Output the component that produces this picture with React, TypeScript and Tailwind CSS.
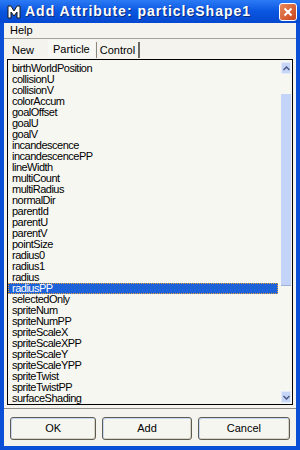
const items = [
  "birthWorldPosition",
  "collisionU",
  "collisionV",
  "colorAccum",
  "goalOffset",
  "goalU",
  "goalV",
  "incandescence",
  "incandescencePP",
  "lineWidth",
  "multiCount",
  "multiRadius",
  "normalDir",
  "parentId",
  "parentU",
  "parentV",
  "pointSize",
  "radius0",
  "radius1",
  "radius",
  "radiusPP",
  "selectedOnly",
  "spriteNum",
  "spriteNumPP",
  "spriteScaleX",
  "spriteScaleXPP",
  "spriteScaleY",
  "spriteScaleYPP",
  "spriteTwist",
  "spriteTwistPP",
  "surfaceShading",
];

const selected = "radiusPP";

function MayaIcon() {
  return (
    <svg width="14" height="14" viewBox="0 0 14 14">
      <path
        d="M1 13V1h3l3 5 3-5h3v12h-3V7l-3 4-3-4v6z"
        fill="#ffffff"
        stroke="#1a1a1a"
        strokeWidth="1"
      />
    </svg>
  );
}

function XpButton({ label, className }: { label: string; className: string }) {
  return (
    <button
      type="button"
      className={`h-[23px] rounded-[3px] border border-[#5e5b52] bg-[#f6f6f1] shadow-[inset_1px_1px_0_#c9d6f4,inset_-1px_-1px_0_#d5d2c6] text-[11px] text-black ${className}`}
    >
      {label}
    </button>
  );
}

export default function App() {
  return (
    <div
      className="w-[300px] h-[450px] flex flex-col bg-[#0b4fd6] overflow-hidden"
      style={{ fontFamily: '"Liberation Sans", Arial, sans-serif' }}
    >
      {/* title bar */}
      <div className="h-[23px] shrink-0 flex items-center pl-[7px] pr-[3px] bg-gradient-to-b from-[#2b7af5] via-[#0a55e0] to-[#0648cf]">
        <MayaIcon />
        <span className="ml-[4px] text-[14px] font-bold text-white tracking-[1px] [text-shadow:1px_1px_0_#0a2a7a]">
          Add Attribute: particleShape1
        </span>
        <div className="ml-auto w-[18px] h-[18px] rounded-[3px] border border-white bg-gradient-to-br from-[#e88a5c] to-[#c8401a] flex items-center justify-center">
          <svg width="10" height="10" viewBox="0 0 10 10">
            <path d="M1.5 1.5l7 7M8.5 1.5l-7 7" stroke="#ffffff" strokeWidth="2" />
          </svg>
        </div>
      </div>

      {/* dialog body */}
      <div className="flex-1 mx-[4px] mb-[4px] bg-[#f4f3ee] flex flex-col">
        {/* menu */}
        <div className="h-[16px] shrink-0 flex items-center px-[6px] text-[11px] text-black border-b border-[#a3a29b]">
          Help
        </div>

        {/* tabs */}
        <div className="h-[19px] shrink-0 flex items-end px-[4px] text-[11px] text-black">
          <div className="h-[16px] px-[4px] flex items-center">New</div>
          <div className="h-[18px] ml-[10px] px-[5px] flex items-center bg-[#f7f7f3]">Particle</div>
          <div className="h-[16px] ml-[1px] px-[3px] flex items-center border-l border-r-2 border-l-[#8a8980] border-r-[#6b6a64]">
            Control
          </div>
        </div>

        {/* list + buttons panel */}
        <div className="flex-1 flex flex-col">
          <div className="relative mx-[3px] mt-[1px] h-[346px] border border-black bg-[#f7f7f2] overflow-hidden">
            <div className="pt-[3px] pl-[4px] pr-[14px]">
              {items.map((item) => (
                <div
                  key={item}
                  className={`h-[11px] leading-[11px] text-[11px] tracking-[-0.5px] whitespace-nowrap ${
                    item === selected
                      ? "bg-[#1d62d8] text-white -ml-[4px] pl-[4px] outline-1 outline-dotted outline-[#e8a23a] -outline-offset-1"
                      : "text-black"
                  }`}
                >
                  {item}
                </div>
              ))}
            </div>

            {/* scrollbar */}
            <div className="absolute top-[2px] bottom-[1px] right-[1px] w-[10px] flex flex-col">
              <div className="h-[12px] bg-[#c7d5f7] border border-[#e4ebfb] flex items-center justify-center">
                <svg width="7" height="5" viewBox="0 0 7 5">
                  <path d="M0.5 4L3.5 1l3 3" stroke="#4a5a8a" strokeWidth="1.5" fill="none" />
                </svg>
              </div>
              <div className="h-[20px]" />
              <div className="h-[192px] bg-[#c4d4f8] border-b border-[#9fb2dc]" />
              <div className="flex-1" />
              <div className="h-[12px] bg-[#c7d5f7] border border-[#e4ebfb] flex items-center justify-center">
                <svg width="7" height="5" viewBox="0 0 7 5">
                  <path d="M0.5 1L3.5 4l3-3" stroke="#4a5a8a" strokeWidth="1.5" fill="none" />
                </svg>
              </div>
            </div>
          </div>

          <div className="mt-[3px] border-b border-[#8e8d86]" />

          <div className="flex-1 flex items-center gap-[6px] px-[6px] pt-[2px]">
            <XpButton label="OK" className="w-[88px]" />
            <XpButton label="Add" className="w-[91px]" />
            <XpButton label="Cancel" className="w-[94px]" />
          </div>
        </div>
      </div>
    </div>
  );
}
